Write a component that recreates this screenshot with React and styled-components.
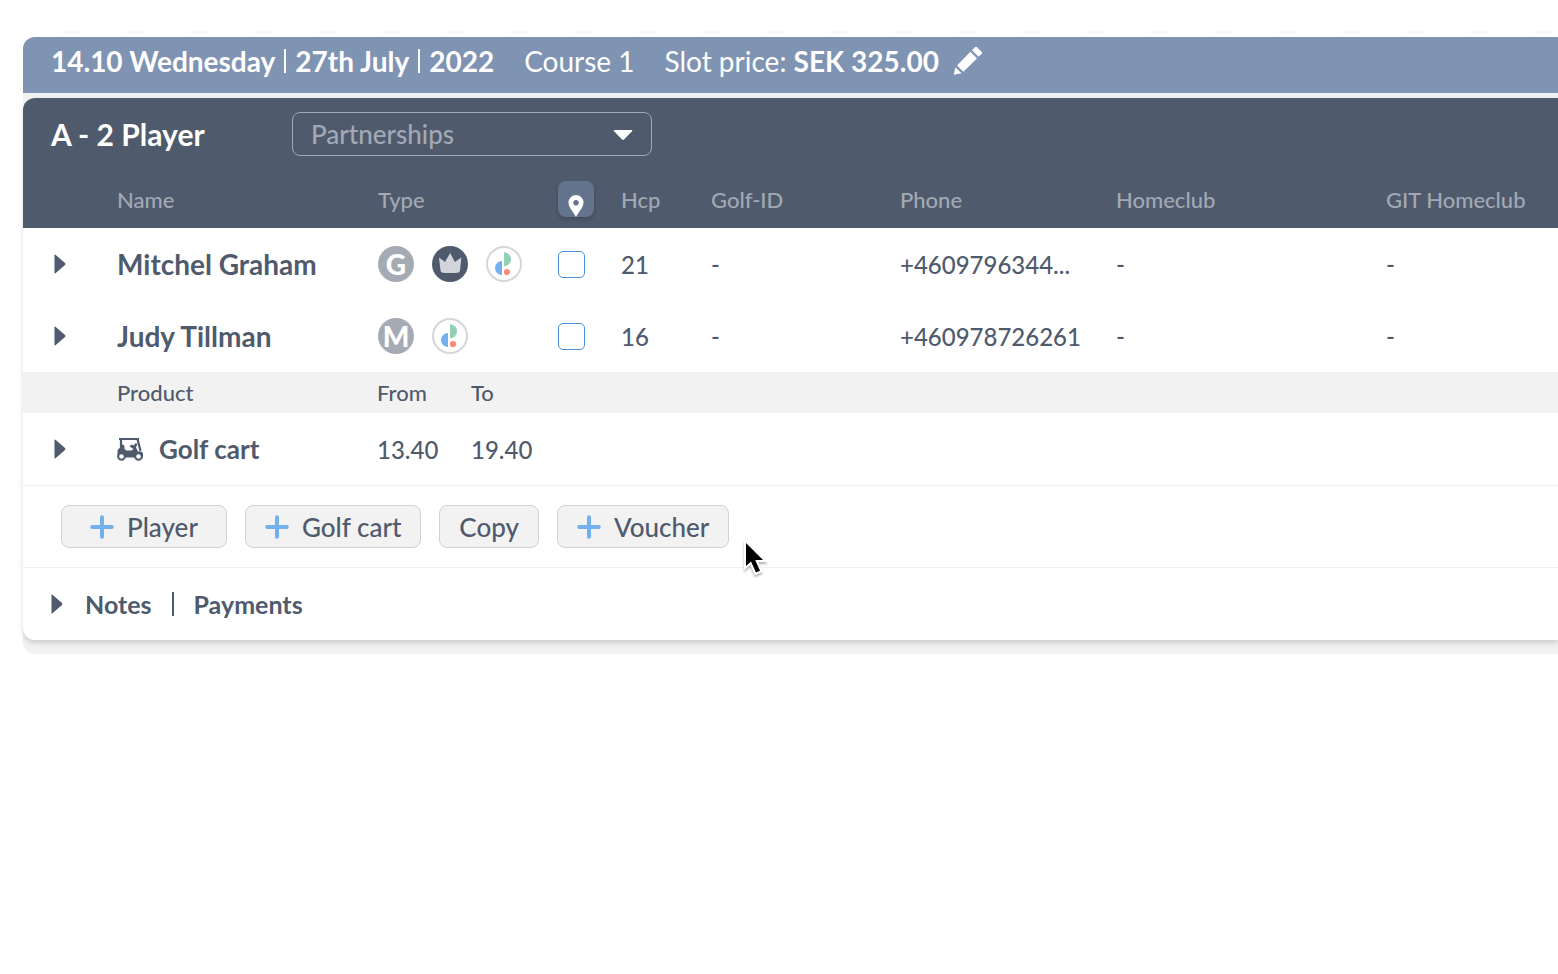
import React from "react";
import styled, { createGlobalStyle } from "styled-components";

const players = [
  {
    id: 1,
    name: "Mitchel Graham",
    types: ["G", "crown", "logo"],
    hcp: "21",
    golfId: "-",
    phone: "+4609796344...",
    homeclub: "-",
    gitHomeclub: "-"
  },
  {
    id: 2,
    name: "Judy Tillman",
    types: ["M", "logo"],
    hcp: "16",
    golfId: "-",
    phone: "+460978726261",
    homeclub: "-",
    gitHomeclub: "-"
  }
];

const TypeBadge = ({ type }) => {
  if (type === "crown") {
    return (
      <Badge $bg="#4f5b6d">
        <svg width="36" height="36" viewBox="0 0 36 36">
          <path
            d="M7 11.4 13 16 18.200 7l4.600 9 6.600-4.600-1.400 13.200q-.2 2-2 2.100-7.800.8-15.500 0-1.800-.1-2-2.100z"
            fill="#d1d4d9"
          />
        </svg>
      </Badge>
    );
  }
  if (type === "logo") {
    return (
      <Badge $bg="#fff" $outlined>
        <svg width="32" height="32" viewBox="2 2 32 32">
          <path d="M18 6.300a7 7 0 0 1 0 14z" fill="#93d1b5" />
          <path d="M16 15a7 7 0 0 0 0 14z" fill="#74b0ee" />
          <circle cx="21" cy="26" r="3.100" fill="#f98a73" />
        </svg>
      </Badge>
    );
  }
  return <Badge $bg="#a5abb5">{type}</Badge>;
};

const Arrow = ({ label }) => (
  <ArrowButton aria-label={label}>
    <svg width="12" height="20" viewBox="0 0 12 20">
      <path d="M.5 1.200q0-1.200 1-.4l9.500 8.300q.9.900 0 1.800L1.500 19.200q-1 .8-1-.4z" fill="#4f5b6d" />
    </svg>
  </ArrowButton>
);

const Plus = () => (
  <svg width="24" height="24" viewBox="0 0 24 24">
    <path d="M12 2.200v19.600M2.200 12h19.600" stroke="#74b0ee" strokeWidth="4" strokeLinecap="round" />
  </svg>
);

const CartIcon = () => (
  <svg width="26" height="24" viewBox="0 0 26 24">
    <path d="M2 2h20M4 2v9M20.500 2l3 12" stroke="#4f5b6d" strokeWidth="2.200" fill="none" />
    <path
      d="M.5 19v-3.500q0-3.500 2.500-5V7.500h2q2.500 0 2.500 2v2.500l2 1.500h5l2-1.500-4-2.500 2-2 2.500 1 1.500-2.500 2 1-1.500 3.500 2 4h2.500q3 .5 3 4.500v1.500H.5z"
      fill="#4f5b6d"
    />
    <circle cx="4.500" cy="19.500" r="3.300" fill="#fff" stroke="#4f5b6d" strokeWidth="2" />
    <circle cx="21.500" cy="19.500" r="3.300" fill="#fff" stroke="#4f5b6d" strokeWidth="2" />
  </svg>
);

export default () => (
  <Page>
    <GlobalStyle />
    <Booking>
      <SlotBar>
        <SlotDate>
          <strong>14.10 Wednesday</strong>
          <Divider />
          <strong>27th July</strong>
          <Divider />
          <strong>2022</strong>
        </SlotDate>
        <span>Course 1</span>
        <SlotPrice>
          <span>
            Slot price: <strong>SEK 325.00</strong>
          </span>
          <PlainButton aria-label="Edit price">
            <svg width="30" height="30" viewBox="0 0 30 30" fill="#fff">
              <path d="M.8 28.700 2.400 21.200 8.600 27.200zM4 19.400 17.400 5.800l6.600 6.600L10.400 25.800zM19 4.200 22.200 1q.8-.7 1.600 0l5.200 5.200q.5.600 0 1.200l-3.400 3.400z" />
            </svg>
          </PlainButton>
        </SlotPrice>
      </SlotBar>

      <Card>
        <CardHeader>
          <Title>A - 2 Player</Title>
          <SelectBox>
            <Select aria-label="Partnerships" defaultValue="">
              <option value="">Partnerships</option>
            </Select>
            <svg width="20" height="11" viewBox="0 0 20 11">
              <path d="M1.500 0h17q1.500 0 .5 1.200l-8 8.400q-1 .9-2 0l-8-8.400Q0 0 1.500 0z" fill="#fff" />
            </svg>
          </SelectBox>
        </CardHeader>

        <Table>
          <colgroup>
            <Col $w={94} />
            <Col $w={261} />
            <Col $w={180} />
            <Col $w={63} />
            <Col $w={90} />
            <Col $w={189} />
            <Col $w={216} />
            <Col $w={270} />
            <col />
          </colgroup>
          <PlayerHead>
            <tr>
              <th />
              <th>Name</th>
              <th>Type</th>
              <th>
                <PinButton aria-label="Check in">
                  <svg width="16" height="22" viewBox="0 0 16 22">
                    <path
                      d="M8 0a7.500 7.500 0 0 1 7.500 7.500C15.500 12.500 10.500 17 8 22 5.500 17 .5 12.500.5 7.500A7.500 7.500 0 0 1 8 0zm0 5a2.700 2.700 0 1 0 0 5.400A2.700 2.700 0 0 0 8 5z"
                      fill="#fff"
                    />
                  </svg>
                </PinButton>
              </th>
              <th>Hcp</th>
              <th>Golf-ID</th>
              <th>Phone</th>
              <th>Homeclub</th>
              <th>GIT Homeclub</th>
            </tr>
          </PlayerHead>
          <tbody>
            {players.map(player => (
              <Row key={player.id}>
                <ArrowCell>
                  <Arrow label={`Expand ${player.name}`} />
                </ArrowCell>
                <NameCell>{player.name}</NameCell>
                <td>
                  <Badges>
                    {player.types.map(type => (
                      <TypeBadge key={type} type={type} />
                    ))}
                  </Badges>
                </td>
                <td>
                  <Checkbox type="checkbox" aria-label={`Check in ${player.name}`} />
                </td>
                <td>{player.hcp}</td>
                <td>{player.golfId}</td>
                <td>{player.phone}</td>
                <td>{player.homeclub}</td>
                <td>{player.gitHomeclub}</td>
              </Row>
            ))}
          </tbody>
        </Table>

        <Table>
          <colgroup>
            <Col $w={94} />
            <Col $w={260} />
            <Col $w={94} />
            <col />
          </colgroup>
          <ProductHead>
            <tr>
              <th />
              <th>Product</th>
              <th>From</th>
              <th>To</th>
            </tr>
          </ProductHead>
          <tbody>
            <Row>
              <ArrowCell>
                <Arrow label="Expand Golf cart" />
              </ArrowCell>
              <td>
                <Product>
                  <CartIcon />
                  Golf cart
                </Product>
              </td>
              <td>13.40</td>
              <td>19.40</td>
            </Row>
          </tbody>
        </Table>

        <Actions>
          <ActionButton $wide>
            <Plus />
            Player
          </ActionButton>
          <ActionButton>
            <Plus />
            Golf cart
          </ActionButton>
          <ActionButton>Copy</ActionButton>
          <ActionButton>
            <Plus />
            Voucher
          </ActionButton>
          <Pointer width="26" height="38" viewBox="0 0 26 38">
            <path
              d="M3 3v23l5-4.500 5 11 4-1.800-4.800-10.700H20z"
              fill="#000"
              stroke="#fff"
              strokeWidth="4"
              paintOrder="stroke"
            />
          </Pointer>
        </Actions>

        <Footer>
          <Arrow label="Expand notes and payments" />
          <FooterLinks>
            <FooterButton>Notes</FooterButton>
            <Divider />
            <FooterButton>Payments</FooterButton>
          </FooterLinks>
        </Footer>
      </Card>
    </Booking>
  </Page>
);

const GlobalStyle = createGlobalStyle`
  * {
    box-sizing: border-box;
  }
  body {
    margin: 0;
    background: #fff;
    color: #4f5b6d;
    font-family: Lato, "Open Sans", sans-serif;
    font-size: 26px;
    font-weight: 500;
  }
  button, select {
    font: inherit;
    color: inherit;
  }
  svg {
    display: block;
    flex: none;
  }
`;

// faint dashed guide runs along the top of the page
const Page = styled.main`
  padding: 37px 0 37px 23px;
  background: repeating-linear-gradient(
      to right,
      #f8f8f8 0 17px,
      transparent 17px 64px
    )
    63px 31px / 100% 3px no-repeat;
`;

const Booking = styled.section`
  background: #f1f1f1;
  border-radius: 12px 0 0 12px;
  padding-bottom: 14px;
`;

const SlotBar = styled.header`
  display: flex;
  align-items: center;
  gap: 30px;
  height: 56px;
  padding: 0 28px 8px;
  margin-bottom: 5px;
  border-radius: 12px 0 0 0;
  background: #7f93b3;
  color: #fff;
  font-size: 28px;
  font-weight: 400;
  white-space: nowrap;
`;

const SlotDate = styled.div`
  display: flex;
  align-items: center;
  gap: 9px;
`;

const SlotPrice = styled.div`
  display: flex;
  align-items: center;
  gap: 14px;
`;

const Divider = styled.span`
  width: 2px;
  height: 24px;
  background: currentColor;
`;

const PlainButton = styled.button`
  display: block;
  padding: 0;
  border: 0;
  background: none;
  cursor: pointer;
`;

const ArrowButton = styled(PlainButton)`
  flex: none;
`;

const Card = styled.div`
  overflow: hidden;
  border-radius: 12px 0 0 12px;
  background: #fff;
  box-shadow: 0 3px 5px rgba(0, 0, 0, 0.14);
`;

const CardHeader = styled.div`
  display: flex;
  align-items: center;
  padding: 14px 28px;
  background: #4f5b6d;
`;

const Title = styled.h2`
  width: 241px;
  margin: 0;
  color: #fff;
  font-size: 30px;
  line-height: 36px;
  font-weight: 700;
`;

const SelectBox = styled.div`
  position: relative;
  width: 360px;
  color: #a2a9b4;
  svg {
    position: absolute;
    right: 19px;
    top: 18px;
    pointer-events: none;
  }
`;

const Select = styled.select`
  display: block;
  appearance: none;
  width: 100%;
  height: 44px;
  padding: 0 18px;
  border: 1px solid #a2a9b4;
  border-radius: 8px;
  background: transparent;
`;

const Table = styled.table`
  width: 100%;
  table-layout: fixed;
  border-collapse: collapse;
  th,
  td {
    padding: 0;
    text-align: left;
    white-space: nowrap;
  }
  th {
    font-size: 22px;
    font-weight: 500;
  }
`;

const Col = styled.col`
  width: ${props => props.$w}px;
`;

const PlayerHead = styled.thead`
  background: #4f5b6d;
  color: #a2a9b4;
  th {
    height: 58px;
  }
`;

const ProductHead = styled.thead`
  background: #f2f2f2;
  th {
    height: 41px;
  }
`;

const Row = styled.tr`
  td {
    height: 72px;
    font-size: 24px;
  }
`;

const ArrowCell = styled.td`
  ${ArrowButton} {
    margin-left: 31px;
  }
`;

const NameCell = styled.td`
  && {
    font-size: 28px;
    font-weight: 700;
  }
`;

const Badges = styled.div`
  display: flex;
  gap: 18px;
`;

const Badge = styled.span`
  display: flex;
  align-items: center;
  justify-content: center;
  width: 36px;
  height: 36px;
  border: ${props => (props.$outlined ? "2px solid #d5d6db" : "0")};
  border-radius: 50%;
  background: ${props => props.$bg};
  color: #fff;
  font-size: 28px;
  font-weight: 900;
  line-height: 36px;
`;

const PinButton = styled.button`
  display: flex;
  align-items: flex-end;
  justify-content: center;
  width: 36px;
  height: 36px;
  padding: 0;
  border: 0;
  border-radius: 8px;
  background: #64748c;
  box-shadow: 0 2px 4px rgba(0, 0, 0, 0.2);
`;

const Checkbox = styled.input`
  display: block;
  appearance: none;
  width: 27px;
  height: 27px;
  margin: 0;
  border: 1px solid #4a90d9;
  border-radius: 5px;
  background: #fff;
`;

const Product = styled.div`
  display: flex;
  align-items: center;
  gap: 16px;
  font-size: 26px;
  font-weight: 700;
`;

const Actions = styled.div`
  position: relative;
  display: flex;
  gap: 18px;
  padding: 19px 38px;
  border: 1px solid #f0f0f0;
  border-width: 1px 0;
`;

const ActionButton = styled.button`
  display: flex;
  align-items: center;
  gap: 13px;
  height: 43px;
  padding: 0 ${props => (props.$wide ? 28 : 19)}px;
  border: 1px solid #d0d1d3;
  border-radius: 8px;
  background: #f2f2f2;
`;

// mouse pointer floating over the bar
const Pointer = styled.svg`
  position: absolute;
  left: 720px;
  top: 54px;
  filter: drop-shadow(0 2px 1px rgba(0, 0, 0, 0.3));
`;

const Footer = styled.div`
  display: flex;
  align-items: center;
  gap: 22px;
  height: 72px;
  padding: 0 28px;
`;

const FooterLinks = styled.div`
  display: flex;
  align-items: center;
  gap: 20px;
`;

const FooterButton = styled(PlainButton)`
  font-size: 25px;
  font-weight: 700;
`;
